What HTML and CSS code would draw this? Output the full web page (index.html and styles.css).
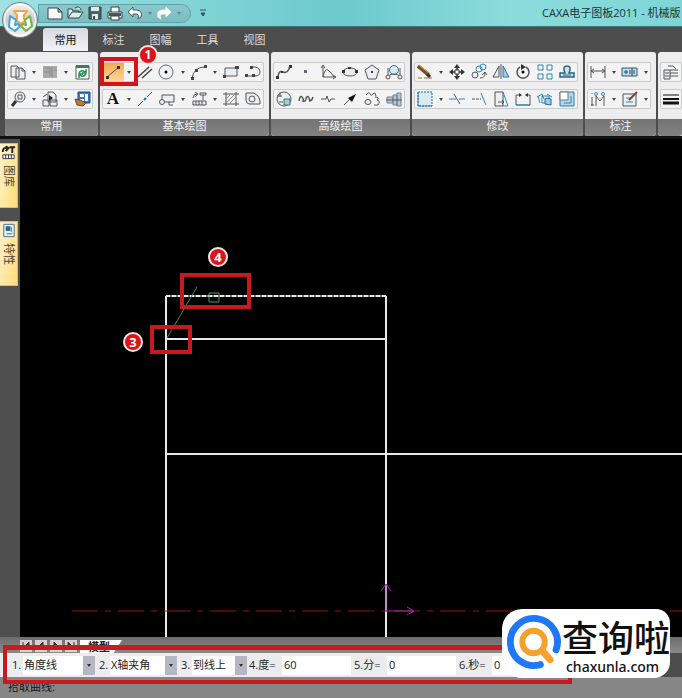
FILE: index.html
```html
<!DOCTYPE html>
<html lang="zh-CN">
<head>
<meta charset="utf-8">
<meta name="viewport" content="width=device-width">
<title>CAXA电子图板2011</title>
<link rel="stylesheet" href="styles.css">
</head>
<body>
<header class="titlebar">
  <button class="orb" aria-label="菜单">
    <svg width="38" height="38" viewBox="0 0 38 38"><defs><linearGradient id="orb" x1="0" y1="0" x2="0" y2="1"><stop offset="0" stop-color="#f4f4f4"/><stop offset=".5" stop-color="#c9cccd"/><stop offset="1" stop-color="#f6f6f6"/></linearGradient></defs>
      <circle cx="19" cy="19" r="17.500" fill="url(#orb)" stroke="#777f80"/><circle cx="19" cy="19" r="15.500" fill="none" stroke="#fff"/>
      <g fill="#fff" stroke-width="2" stroke-linejoin="round"><path d="M13 10h13l-3 4v4h3l-6 5-6-5h2v-4z" stroke="#f0a548"/><path d="M9 15l-1 11 6 4 5-5-2-2-3 1 1-5z" stroke="#48a4dc"/><path d="M29 15l2 10-6 5-5-5 2-2 3 1-1-5z" stroke="#78b443"/></g></svg>
  </button>
  <nav class="quick" aria-label="快速访问">
    <button aria-label="新建"><svg viewBox="0 0 18 16"><path d="M2 3h10l4 4v7H2zM12 3v4h4" fill="#f5fbfb" stroke="#384447"/></svg></button>
    <button aria-label="打开"><svg viewBox="0 0 18 16"><path d="M2 13V4h4l1 2h6v2M2 13l4-6h11l-4 6zM9 3c3-2 5-1 6 2" fill="#dbeeee" stroke="#384447"/></svg></button>
    <button aria-label="保存"><svg viewBox="0 0 18 16"><path d="M3 2h12v12H3z" fill="#506166" stroke="#334044"/><path d="M5 2h8v4H5zM6 9h6v5H6z" fill="#dcebed"/><path d="M7 11h2v3H7z" fill="#38474b"/></svg></button>
    <button aria-label="打印"><svg viewBox="0 0 18 16"><path d="M5 7V2h8v5M2 7h14v6H2z" fill="#f4f9f9" stroke="#334044"/><path d="M3 8h12v3H3z" fill="#49595d"/><path d="M5 11h8v4H5z" fill="#fff" stroke="#334044"/></svg></button>
    <button aria-label="撤销"><svg viewBox="0 0 18 16"><path d="M2 7l5-5v3h4q6 1 4 7l-3 2q2-5-2-5H7v3z" fill="#fff" stroke="#42595d"/></svg></button>
    <i class="caret"></i>
    <button aria-label="重做"><svg viewBox="0 0 18 16"><path d="M16 7l-5-5v3H7q-6 1-4 7l3 2q-2-5 2-5h3v3z" fill="#fff" stroke="#e5f5f5"/></svg></button>
    <i class="caret"></i>
  </nav>
  <button class="more" aria-label="自定义"><svg width="8" height="8" viewBox="0 0 8 8"><path d="M1 1h6M2 4h4L4 7z" stroke="#36575c" fill="#36575c"/></svg></button>
  <h1>CAXA电子图板2011 - 机械版</h1>
</header>
<nav class="tabs">
  <button class="active">常用</button><button>标注</button><button>图幅</button><button>工具</button><button>视图</button>
</nav>
<section class="ribbon">
  <div class="panel">
    <div class="row">
      <button aria-label="粘贴"><svg viewBox="0 0 20 18"><path d="M3 3h6l2 2v9H3zM8 5h6l3 3v8H8zM14 5v3h3" class="k f"/></svg></button><i class="caret"></i>
      <button aria-label="复制"><svg viewBox="0 0 20 18"><path d="M3 3h14v12H3z" fill="#aaa"/><path d="M5 5h5v8M12 4v10M4 9h5M14 7h3" stroke="#888" fill="none"/></svg></button><i class="caret"></i>
      <button aria-label="刷新"><svg viewBox="0 0 20 18"><path d="M4 3h13v13H4z" fill="#fff" stroke="#555"/><path d="M4 2h13v3H4z" fill="#397a68"/><path d="M7 10q3-4 6-1M14 6v4h-4M14 11q-3 4-6 1M7 15v-4h4" fill="none" stroke="#149448" stroke-width="1.500"/></svg></button>
    </div>
    <div class="row">
      <button aria-label="缩放"><svg viewBox="0 0 20 18"><circle cx="12" cy="7" r="5" class="k f"/><path d="M10 5h4v4h-4z" class="k"/><path d="M8 11l-4 5" stroke="#333" stroke-width="3"/></svg></button><i class="caret"></i>
      <button aria-label="平移"><svg viewBox="0 0 20 18"><path d="M8 2h5l3 3v7H8zM3 10h6v6H3zM10 10h7v6h-7z" class="k f"/><path d="M3 7l4-3" class="k"/><path d="M9 5l4 3-4 3z" fill="#222"/></svg></button><i class="caret"></i>
      <button aria-label="特性"><svg viewBox="0 0 20 18"><path d="M6 2h12v11H6z" fill="#3d78bb" stroke="#234878"/><path d="M8 4h4v3H8zM13 4h3v7h-3zM8 9h4v2H8z" fill="#fff"/><path d="M3 9l5 1 6 3-3 3-6-1z" fill="#bd783c" stroke="#784012"/></svg></button>
    </div>
    <h2>常用</h2>
  </div>
  <div class="panel">
    <div class="row">
      <div class="split"><button class="on" aria-label="直线"><svg viewBox="0 0 20 18"><path d="M4 14L16 4" class="k"/><path d="M3 13h3v3H3zM14 3h3v3h-3z" fill="#333"/></svg></button><i class="caret"></i><span class="mark">1</span></div>
      <button aria-label="平行线"><svg viewBox="0 0 20 18"><path d="M3 14L14 4M7 15L17 6" stroke="#444" stroke-width="1.500"/></svg></button>
      <button aria-label="圆"><svg viewBox="0 0 20 18"><circle cx="9" cy="9" r="7" fill="none" stroke="#57657a"/><circle cx="9" cy="9" r="1.500"/></svg></button><i class="caret"></i>
      <button aria-label="圆弧"><svg viewBox="0 0 20 18"><path d="M3 15Q5 4 16 4" class="k"/><path d="M2 14h3v3H2zM15 2h3v3h-3zM6 6h3v3H6z" fill="#444"/></svg></button><i class="caret"></i>
      <button aria-label="矩形"><svg viewBox="0 0 20 18"><path d="M4 5h12v8H4z" class="k f"/><path d="M14 3h4v3h-4zM2 12h3v3H2z" fill="#444"/></svg></button>
      <button aria-label="多段线"><svg viewBox="0 0 20 18"><path d="M9 4h3q5 1 5 5t-5 4H3" class="k"/><path d="M7 3h3v3H7zM2 11h3v3H2zM9 11h3v3H9z" fill="#444"/></svg></button>
    </div>
    <div class="row">
      <button aria-label="文字" class="letter">A</button><i class="caret"></i>
      <button aria-label="中心线"><svg viewBox="0 0 20 18"><path d="M3 16l5-5M12 7l5-5" class="k"/><path d="M9 10l2-2" stroke="#226cb5" stroke-width="2"/></svg></button>
      <button aria-label="轮廓"><svg viewBox="0 0 20 18"><path d="M5 5h12v7H8" class="k f"/><path d="M5 5v5" class="k"/><circle cx="5" cy="12" r="2.500" class="k f"/><path d="M12 12v3h4" class="k"/></svg></button><i class="caret"></i>
      <button aria-label="图库"><svg viewBox="0 0 20 18"><path d="M4 8q0-4 4-4M6 2l3 2-3 3M11 3h6v2h-6zM14 5v5" class="k"/><path d="M4 11h13v4H4z" class="k f"/><path d="M7 11v4M10 11v4M13 11v4" class="k"/></svg></button><i class="caret"></i>
      <button aria-label="剖面线"><svg viewBox="0 0 20 18"><path d="M5 2v14M15 2v14M2 4h16M2 14h16" class="k"/><path d="M5 9l4-4M5 13l8-8M9 13l6-6" stroke="#888"/></svg></button>
      <button aria-label="填充"><svg viewBox="0 0 20 18"><path d="M3 3h8q6 3 6 8v3H6q-3-1-3-4z" class="k f"/><circle cx="9" cy="9" r="3" class="k f"/></svg></button>
    </div>
    <h2>基本绘图</h2>
  </div>
  <div class="panel">
    <div class="row">
      <button aria-label="样条"><svg viewBox="0 0 20 18"><path d="M4 15Q4 7 9 9t7-6" class="k" stroke-width="1.500"/><path d="M2 13h3v3H2zM15 2h3v3h-3zM7 8h2v2H7z" fill="#333"/></svg></button>
      <button aria-label="点"><svg viewBox="0 0 20 18"><path d="M8 7h3v3H8z" fill="#667"/></svg></button>
      <button aria-label="公式曲线"><svg viewBox="0 0 20 18"><path d="M5 3v11h12M5 14q2-9 5-7t6 7M3 5l2-3 2 3M15 12l3 2-3 2" class="k"/></svg></button>
      <button aria-label="椭圆"><svg viewBox="0 0 20 18"><ellipse cx="10" cy="9" rx="7" ry="4" class="k f"/><path d="M2 7h3v3H2zM15 7h3v3h-3zM8 4h3v2H8z" fill="#333"/></svg></button>
      <button aria-label="正多边形"><svg viewBox="0 0 20 18"><path d="M10 2l7 5-3 9H6L3 7z" class="k f"/><circle cx="10" cy="9" r="1"/></svg></button>
      <button aria-label="圆弧拟合"><svg viewBox="0 0 20 18"><circle cx="10" cy="7" r="4.500" fill="#d8ecf7" stroke="#3d7391"/><path d="M4 5v8M16 5v8M4 13q6-4 12 0" class="k"/><circle cx="4" cy="14" r="2" class="k f"/><circle cx="16" cy="14" r="2" class="k f"/></svg></button>
    </div>
    <div class="row">
      <button aria-label="局部放大"><svg viewBox="0 0 20 18"><circle cx="10" cy="9" r="7" class="k f"/><path d="M10 9h6v6h-6z" fill="#9dd0dc" stroke="#40737d"/><path d="M3 6h5M6 2v5M5 12h4" class="k"/></svg></button>
      <button aria-label="波浪线"><svg viewBox="0 0 20 18"><path d="M3 11q1-6 3-4t1 4q3 1 3-3 2-3 3 0t0 3q3 0 4-4" class="k" stroke-width="1.500"/></svg></button>
      <button aria-label="双折线"><svg viewBox="0 0 20 18"><path d="M3 9h5l1-3 2 6 2-3h4" class="k"/></svg></button>
      <button aria-label="箭头"><svg viewBox="0 0 20 18"><path d="M4 15l8-8" class="k"/><path d="M16 4L8 8l4 4z" fill="#111"/></svg></button>
      <button aria-label="齿轮"><svg viewBox="0 0 20 18"><path d="M4 5q3-4 4-1t3 0 3 2M13 7q5 0 2 3 4 1 1 5h-4" class="k"/><ellipse cx="6" cy="12" rx="3" ry="2.500" class="k f"/></svg></button>
      <button aria-label="孔轴"><svg viewBox="0 0 20 18"><path d="M3 7h6v6H3zM9 5h4v10H9zM13 3h4v13h-4z" fill="#b5c8d3" stroke="#70818c"/><path d="M2 10h16" class="k"/></svg></button>
    </div>
    <h2>高级绘图</h2>
  </div>
  <div class="panel">
    <div class="row">
      <button aria-label="删除"><svg viewBox="0 0 20 18"><path d="M3 3l11 9" stroke="#765029" stroke-width="4"/><path d="M4 2l11 9" stroke="#e6b364"/><path d="M3 15h4M9 15h8" stroke="#b66130"/><path d="M12 11l3 3" stroke="#333" stroke-width="3"/></svg></button><i class="caret"></i>
      <button aria-label="移动"><svg viewBox="0 0 20 18"><path d="M10 3v12M4 9h12" stroke="#333" stroke-width="1.500"/><path d="M10 1l3 4H7zM10 17l3-4H7zM2 9l4-3v6zM18 9l-4-3v6z" fill="#333"/><path d="M8 7h4v4H8z" fill="#fff" stroke="#333"/></svg></button>
      <button aria-label="平移复制"><svg viewBox="0 0 20 18"><circle cx="6" cy="12" r="3" class="k f"/><circle cx="10" cy="6" r="3" class="b"/><circle cx="14" cy="4" r="3" class="b"/><path d="M11 15q5 0 5-5M13 12l3-3 2 3" class="k"/></svg></button>
      <button aria-label="镜像"><svg viewBox="0 0 20 18"><path d="M8 3v11H2zM10 1v15" class="k f"/><path d="M12 3v11h6z" fill="#9bcbe9" stroke="#2d79ad"/></svg></button>
      <button aria-label="旋转"><svg viewBox="0 0 20 18"><path d="M7 4a6 6 0 1 0 6 0" class="k" stroke-width="1.500"/><path d="M8 1l5 3-5 3z" fill="#333"/><circle cx="10" cy="9" r="1.500"/></svg></button>
      <button aria-label="阵列"><svg viewBox="0 0 20 18"><path d="M3 2h5v5H3zM12 2h5v5h-5zM3 11h5v5H3zM12 11h5v5h-5z" class="b"/></svg></button>
      <button aria-label="偏移"><svg viewBox="0 0 20 18"><path d="M3 14v-4h5q-3-7 2-7t2 7h5v4z" fill="#c5e1ed" stroke="#2d6381" stroke-width="1.500"/><path d="M6 12h8" stroke="#2d6381"/></svg></button>
    </div>
    <div class="row">
      <button aria-label="拉伸框"><svg viewBox="0 0 20 18"><path d="M3 2h14v14H3z" fill="#d9eaf3" stroke="#1e6594" stroke-dasharray="2 1"/><path d="M3 2v14h14" class="b"/></svg></button><i class="caret"></i>
      <button aria-label="裁剪"><svg viewBox="0 0 20 18"><path d="M2 9h7M12 9h6" class="b"/><path d="M7 4l6 10" class="k"/></svg></button>
      <button aria-label="延伸"><svg viewBox="0 0 20 18"><path d="M3 9h9" class="k" stroke-dasharray="3 1"/><path d="M12 3l5 12" class="b"/></svg></button>
      <button aria-label="拉伸"><svg viewBox="0 0 20 18"><path d="M4 2h8v14H4z" class="k f"/><path d="M12 2l5 14h-5" class="b"/><path d="M7 12h6M11 10l2 2-2 2" class="k"/></svg></button>
      <button aria-label="打断"><svg viewBox="0 0 20 18"><path d="M8 5H3v10h14V5h-4" class="k"/><path d="M6 3l3 2-3 2zM15 3l-3 2 3 2z" fill="#333"/><path d="M3 15h14" class="b"/></svg></button>
      <button aria-label="分解"><svg viewBox="0 0 20 18"><path d="M2 7l5-3 2 5M3 6l2 7M7 6h7v7H7z" class="b"/><path d="M12 8l4 1v6l-6-1v-5z" fill="#9bcbe9" stroke="#1d6998"/><path d="M12 4l5 3" class="b"/></svg></button>
      <button aria-label="缩放图形"><svg viewBox="0 0 20 18"><path d="M3 2h14v14H3z" fill="#b5d8e8" stroke="#2d79ad"/><path d="M3 2h8v8H3z" fill="#fff" stroke="#777"/><path d="M7 13h7V6" class="b"/></svg></button>
    </div>
    <h2>修改</h2>
  </div>
  <div class="panel">
    <div class="row">
      <button aria-label="尺寸"><svg viewBox="0 0 20 18"><path d="M3 3v12M17 3v12M3 8h14M6 6L3 8l3 2M14 6l3 2-3 2" class="k"/></svg></button><i class="caret"></i>
      <button aria-label="公差"><svg viewBox="0 0 20 18"><path d="M2 5h15v8H2z" fill="#bddced" stroke="#315973"/><path d="M4 9h4M6 7v4M10 7v4M14 7v4M12 5v8" stroke="#28475e"/></svg></button><i class="caret"></i>
    </div>
    <div class="row">
      <button aria-label="坐标"><svg viewBox="0 0 20 18"><path d="M4 7v9M3 15h3M8 16V6l4 5 4-5v10M4 3v1" class="k"/><circle cx="8" cy="4" r="1.500" class="b"/><circle cx="15" cy="4" r="1.500" class="b"/></svg></button><i class="caret"></i>
      <button aria-label="标注编辑"><svg viewBox="0 0 20 18"><path d="M3 4h13v12H3z" class="k f"/><path d="M6 8h5M6 12h7" class="b"/><path d="M9 10l8-8" stroke="#8a3e27" stroke-width="2"/></svg></button><i class="caret"></i>
    </div>
    <h2>标注</h2>
  </div>
  <div class="panel last">
    <div class="row">
      <button aria-label="图层"><svg viewBox="0 0 20 18"><path d="M7 3h5l3 3M9 7h8M9 10h8M9 13h8" class="k"/><path d="M3 7h6v9H3zM4 10h4M4 13h4" class="k f"/></svg></button><button aria-label="图层列表"></button>
    </div>
    <div class="row">
      <button aria-label="线宽"><svg viewBox="0 0 20 18"><path d="M2 5h16" stroke="#111"/><path d="M2 9h16" stroke="#111" stroke-width="2"/><path d="M2 13h16" stroke="#111" stroke-width="3"/></svg></button><button aria-label="线型"></button>
    </div>
    <h2></h2>
  </div>
</section>
<main>
  <aside>
    <button><svg viewBox="0 0 18 16"><path d="M3 8q0-5 4-4M6 2l3 2-3 3M10 3h6M13 3v6" fill="none" stroke="#222" stroke-width="2"/><path d="M3 11h12v4H3z" fill="#fff" stroke="#334"/><path d="M6 11v4M9 11v4M12 11v4" stroke="#334"/></svg><span>图库</span></button>
    <button><svg viewBox="0 0 18 16"><path d="M4 2h11v13H4z" fill="#e7f2f8" stroke="#487089"/><path d="M6 4h5v5H6z" fill="#246aa5"/><path d="M7 12h6M12 5v5" stroke="#467"/></svg><span>特性</span></button>
  </aside>
  <svg class="drawing" role="img" aria-label="绘图区">
    <g fill="none" stroke="#e8e8e8" stroke-width="2">
      <path d="M146 157V600M366 157V600M146 200H366M146 315H1600"/>
      <path d="M146 157H366" stroke="#777"/><path d="M146 157H366" stroke-dasharray="4 2"/>
    </g>
    <path d="M52 472H1600" stroke="#a20d18" stroke-dasharray="26 7 6 7"/>
    <path d="M366 472V446M361 452l5-7 5 7M366 472h28M387 468l7 4-7 4" fill="none" stroke="#a02ab0"/>
    <path d="M147 199L177 148" stroke="#3e8a4a"/><path d="M189 154h10v9h-10z" fill="none" stroke="#4aa06a"/>
    <g fill="none" stroke="#c81a1e" stroke-width="4"><path d="M162 136h67v32h-67zM132 188h38v25h-38z"/></g>
    <g fill="#d9151b" stroke="#f7e6e2" stroke-width="2"><circle cx="198" cy="118" r="9"/><circle cx="113" cy="203" r="9"/></g>
    <g class="num"><text x="198" y="123">4</text><text x="113" y="208">3</text></g>
  </svg>
</main>
<footer>
  <div class="sheets">
    <button aria-label="首页"><svg viewBox="0 0 12 10"><path d="M3 1v8M9 1L5 5l4 4z"/></svg></button><button aria-label="上一页"><svg viewBox="0 0 12 10"><path d="M8 1L4 5l4 4z"/></svg></button><button aria-label="下一页"><svg viewBox="0 0 12 10"><path d="M4 1l4 4-4 4z"/></svg></button><button aria-label="末页"><svg viewBox="0 0 12 10"><path d="M9 1v8M3 1l4 4-4 4z"/></svg></button>
    <button class="model">模型</button>
  </div>
  <div class="optbar">
  <form class="options">
    <label for="o1">1.</label><span class="drop"><select id="o1"><option>角度线</option></select></span>
    <label for="o2">2.</label><span class="drop mid"><select id="o2"><option>X轴夹角</option></select></span>
    <label for="o3">3.</label><span class="drop short"><select id="o3"><option>到线上</option></select></span>
    <label for="o4">4.度=</label><input id="o4" value="60">
    <label for="o5">5.分=</label><input id="o5" value="0">
    <label for="o6">6.秒=</label><input id="o6" value="0">
  </form>
  </div>
  <div class="status">拾取曲线:</div>
  <div class="outline"></div>
  <div class="brand">
    <svg width="56" height="58" viewBox="0 0 56 58" fill="none"><path d="M34 51A24 24 0 1 1 50 36" stroke="#1f78f5" stroke-width="7" stroke-linecap="round"/><circle cx="27" cy="28" r="11.500" stroke="#f5a12b" stroke-width="6"/><path d="M36 37l8 9" stroke="#f5a12b" stroke-width="7" stroke-linecap="round"/></svg>
    <div><strong>查询啦</strong><span>chaxunla.com</span></div>
  </div>
</footer>
</body>
</html>
```
FILE: styles.css
```css
* { box-sizing: border-box; }
body {
  margin: 0; min-height: 100vh; display: flex; flex-direction: column; overflow: hidden;
  background: #4d4d4d; font: 11px/16px "Open Sans", "Noto Sans CJK SC", sans-serif; color: #222;
}
button { padding: 0; border: 0; background: none; font: inherit; color: inherit; }
h1, h2 { margin: 0; font-size: 11px; font-weight: 400; white-space: nowrap; }
svg { display: block; }

.titlebar {
  height: 27px; display: flex; align-items: center; padding-left: 38px; position: relative;
  background: linear-gradient(90deg, #9ee3e3, #7fd3d5 30%, #6cc9cc 50%, #8cdcdc 75%, #7ed5d6);
  border-bottom: 1px solid #3f7778;
}
.orb { position: absolute; left: 1px; top: 1px; z-index: 2; }
.quick {
  display: flex; align-items: center; height: 19px; width: 153px; padding-left: 6px;
  border: 1px solid #5fa3a8; border-radius: 0 10px 10px 0;
  background: linear-gradient(#8cc8cb, #79bcc1);
}
.quick button { width: 20px; }
.quick svg { width: 18px; height: 16px; margin: auto; }
.more { margin: 0 8px; }
.titlebar h1 { margin-left: auto; flex: 0 0 140px; overflow: visible; color: #12363a; }

.tabs { height: 24px; display: flex; align-items: flex-end; padding-left: 43px; color: #ddd; }
.tabs button { width: 47px; height: 23px; }
.tabs .active {
  width: 45px; margin-right: 2px; color: #111; border-radius: 3px 3px 0 0;
  background: linear-gradient(#d5d9e2, #f2f3f6);
}

.ribbon {
  display: flex; gap: 2px; padding: 1px 0 0 5px;
  border-bottom: 3px solid #111; white-space: nowrap;
}
.panel { flex: none; padding: 10px 0 0; border-radius: 3px; background: #ededee; }
.panel.last { flex: 1 0 0; overflow: hidden; border-radius: 3px 0 0 3px; }
.row {
  display: flex; align-items: center; height: 20px; margin: 0 5px 7px 2px;
  border-radius: 2px; box-shadow: inset 0 0 0 1px #c9cacd; background: #f3f3f4;
}
.last .row { margin-right: 0; }
.row button { width: 22px; height: 18px; flex: none; }
.row svg { width: 20px; height: 18px; margin: auto; }
.caret { width: 10px; flex: none; }
.caret::after {
  content: ""; display: block; width: 0; margin: auto;
  border: 2px solid transparent; border-top: 3px solid #444; border-bottom: 0;
}
.quick .caret { width: 9px; }
.quick .caret::after { border-top-color: #4f8b91; }
.k { fill: none; stroke: #555; }
.f { fill: #eceff1; }
.b { fill: none; stroke: #2e86bd; }
.letter { font: bold 17px/18px "Liberation Serif", serif; color: #111; }
.panel h2 {
  height: 17px; margin-top: 10px; text-align: center; color: #f5f5f5; line-height: 14px;
  border-radius: 0 0 3px 3px; background: linear-gradient(#747474, #838383);
}
.split { display: flex; align-items: center; position: relative; }
.split .on { background: linear-gradient(#f3a94c, #fbd79a); }
.split::after {
  content: ""; position: absolute; inset: -6px -4px -5px -2px; border: 4px solid #d4141b;
}
.mark {
  position: absolute; z-index: 2; left: 36px; top: -18px; width: 20px; height: 20px;
  border: 2px solid #f4e2df; border-radius: 50%; background: #d9151b;
  color: #fff; font: bold 12px/16px "Noto Sans", sans-serif; text-align: center;
}

main { flex: 1; display: flex; min-height: 300px; background: #000; }
aside { width: 20px; padding: 4px 2px 0 0; background: #4f4f4f; }
aside button {
  display: flex; flex-direction: column; align-items: center; gap: 5px; width: 18px; height: 65px;
  margin-bottom: 13px; color: #4b4230; background: linear-gradient(100deg, #fff3cb, #ffdc79);
  border: 1px solid #d9bd72; border-left: 0;
}
aside svg { width: 17px; height: 16px; flex: none; }
aside span { writing-mode: vertical-rl; text-orientation: sideways; }
.drawing { flex: 1; min-width: 0; height: auto; }
.num { font: bold 13px "Noto Sans", sans-serif; fill: #fff; text-anchor: middle; }

footer { position: relative; background: linear-gradient(#6c6c6c, #898989 25%, #858585); }
.sheets { display: flex; gap: 3px; height: 16px; padding: 3px 0 0 20px; }
.sheets button { width: 12px; height: 12px; background: #d8cfd3; }
.sheets svg { width: 12px; height: 10px; fill: #333; stroke: #333; }
.sheets .model {
  width: 42px; height: 13px; padding-right: 4px; background: #fff; font-weight: 700; line-height: 12px;
  clip-path: polygon(0 0, 100% 0, 80% 100%, 0 100%);
}
.optbar { background: #4d4d4d; }
.options {
  display: flex; align-items: center; height: 24px; width: 568px; max-width: 100%;
  padding-left: 12px; background: #ececef; overflow: hidden; white-space: nowrap;
}
.options label { flex: none; width: 11px; line-height: 20px; }
.drop { position: relative; flex: none; width: 72px; margin-right: 4px; }
.drop.mid { width: 67px; }
.drop.short { width: 55px; margin-right: 2px; }
.drop::after {
  content: ""; position: absolute; right: 4px; top: 8px; pointer-events: none;
  border: 2px solid transparent; border-top: 3px solid #333; border-bottom: 0;
}
.drop select, .options input {
  appearance: none; display: block; width: 100%; height: 19px; margin: 0; padding: 0 0 0 1px;
  border: 0; border-radius: 0; font: inherit; color: #222; background: #fff;
}
.drop select { background: linear-gradient(90deg, #fff 0 calc(100% - 12px), #b5b7c3 calc(100% - 12px)); }
.options input { flex: none; width: 69px; margin-right: 3px; padding: 0 0 2px 2px; }
.options .short ~ label { width: 33px; }
.status { height: 21px; padding-left: 8px; line-height: 20px; color: #161616; }
.outline { position: absolute; left: 3px; top: 8px; width: 569px; max-width: 100%; height: 39px; border: 4px solid #c81b1d; border-top-width: 5px; }
.brand {
  position: absolute; right: 12px; bottom: 20px; width: 168px; height: 69px; padding: 5px 0 0 5px;
  display: flex; border-radius: 20px 14px 16px 20px; background: #fff; color: #111; overflow: hidden;
}
.brand div { flex: none; }
.brand strong { display: block; height: 44px; font: 500 36px/44px "Noto Sans CJK SC", sans-serif; }
.brand span { display: block; margin-left: 4px; font: 500 14px/18px "Noto Sans", sans-serif; }
```
